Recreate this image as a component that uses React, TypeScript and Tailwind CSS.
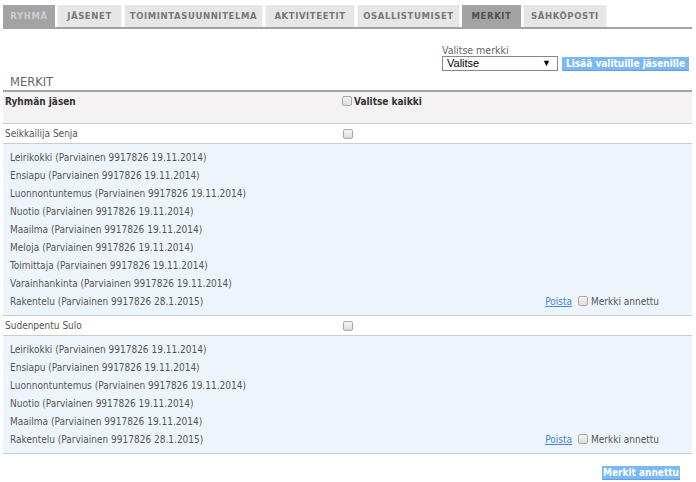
import React from "react";

const tabs = [
  { label: "RYHMÄ", w: "w-[52px]", state: "first" },
  { label: "JÄSENET", w: "w-[65px]", state: "" },
  { label: "TOIMINTASUUNNITELMA", w: "w-[139px]", state: "" },
  { label: "AKTIVITEETIT", w: "w-[90px]", state: "" },
  { label: "OSALLISTUMISET", w: "w-[103px]", state: "" },
  { label: "MERKIT", w: "w-[59px]", state: "active" },
  { label: "SÄHKÖPOSTI", w: "w-[84px]", state: "" },
];

const members = [
  {
    name: "Seikkailija Senja",
    badges: [
      "Leirikokki (Parviainen 9917826 19.11.2014)",
      "Ensiapu (Parviainen 9917826 19.11.2014)",
      "Luonnontuntemus (Parviainen 9917826 19.11.2014)",
      "Nuotio (Parviainen 9917826 19.11.2014)",
      "Maailma (Parviainen 9917826 19.11.2014)",
      "Meloja (Parviainen 9917826 19.11.2014)",
      "Toimittaja (Parviainen 9917826 19.11.2014)",
      "Varainhankinta (Parviainen 9917826 19.11.2014)",
      "Rakentelu (Parviainen 9917826 28.1.2015)",
    ],
  },
  {
    name: "Sudenpentu Sulo",
    badges: [
      "Leirikokki (Parviainen 9917826 19.11.2014)",
      "Ensiapu (Parviainen 9917826 19.11.2014)",
      "Luonnontuntemus (Parviainen 9917826 19.11.2014)",
      "Nuotio (Parviainen 9917826 19.11.2014)",
      "Maailma (Parviainen 9917826 19.11.2014)",
      "Rakentelu (Parviainen 9917826 28.1.2015)",
    ],
  },
];

const Check = () => (
  <span className="inline-block shrink-0 w-[10px] h-[10px] rounded-[2px] border border-[#a9a9a9] bg-gradient-to-b from-[#f4f4f4] to-[#dcdcdc]" />
);

const App: React.FC = () => {
  return (
    <div className="w-[696px] h-[482px] bg-white overflow-hidden font-['DejaVu_Sans_Condensed','DejaVu_Sans',Verdana,sans-serif] text-[10px] text-[#555]">
      {/* Tabs */}
      <div className="pt-[5px] px-[3px]">
        <div className="flex border-b-2 border-[#a3a3a3] w-[689px]">
          {tabs.map((t) => (
            <div
              key={t.label}
              className={`${t.w} h-[22px] mr-[2px] flex items-center justify-center text-[8.5px] font-bold tracking-[0.6px] font-['DejaVu_Sans',Verdana,sans-serif] ${
                t.state === "active"
                  ? "bg-[#a3a3a3] text-[#505050]"
                  : t.state === "first"
                  ? "bg-[#a3a3a3] text-[#c9ced8]"
                  : "bg-[#e6e6e6] text-[#777] border-x border-[#f6f6f6]"
              }`}
            >
              {t.label}
            </div>
          ))}
        </div>
      </div>

      {/* Badge picker */}
      <div className="flex justify-end pr-[7px] mt-[15px]">
        <div className="flex flex-col">
          <span className="text-[10.5px] leading-[12px] text-[#666]">Valitse merkki</span>
          <div className="flex items-end gap-[4px]">
            <div className="w-[116px] h-[15px] border border-[#888] bg-white flex items-center justify-between pl-[4px] pr-[6px] text-[11px] text-black font-['Liberation_Sans',Arial,sans-serif]">
              <span>Valitse</span>
              <span className="text-[9px]">▼</span>
            </div>
            <div className="h-[14px] w-[127px] bg-[#7ab9f3] border-b border-[#5da2e8] text-white font-bold text-[10px] whitespace-nowrap flex items-center justify-center">
              Lisää valituille jäsenille
            </div>
          </div>
        </div>
      </div>

      {/* Title */}
      <div className="px-[10px] pt-[4px] h-[19px] text-[11.5px] text-[#666] leading-[15px] font-['DejaVu_Sans',Verdana,sans-serif]">MERKIT</div>

      {/* Table */}
      <div className="mx-[3px] w-[689px] border-t-2 border-[#a3a3a3]">
        <div className="flex h-[32px] bg-[#f4f2f2] border-b border-[#c8cdd3] pt-[2px] font-bold text-[#333]">
          <div className="w-[339px] pl-[2px]">Ryhmän jäsen</div>
          <div className="flex items-center gap-[2px] h-[14px]">
            <Check />
            <span>Valitse kaikki</span>
          </div>
        </div>

        {members.map((m) => (
          <div key={m.name}>
            <div className="flex items-center h-[20px] border-b border-[#c8cdd3] bg-white text-[#555]">
              <div className="w-[340px] pl-[2px]">{m.name}</div>
              <Check />
            </div>
            <div className="bg-[#eef4fc] border-b border-[#c8cdd3] pt-[4px] pb-[5px]">
              {m.badges.map((b, i) => (
                <div key={b} className="flex items-center h-[18px] pl-[7px]">
                  <span className="flex-1">{b}</span>
                  {i === m.badges.length - 1 && (
                    <div className="flex items-center mr-[33px]">
                      <span className="text-[#3f86dd] underline mr-[6px]">Poista</span>
                      <Check />
                      <span className="ml-[3px]">Merkki annettu</span>
                    </div>
                  )}
                </div>
              ))}
            </div>
          </div>
        ))}
      </div>

      <div className="flex justify-end pr-[16px] pt-[12px]">
        <div className="h-[14px] w-[78px] bg-[#7ab9f3] border-b border-[#5da2e8] text-white font-bold text-[10px] whitespace-nowrap flex items-center justify-center">
          Merkit annettu
        </div>
      </div>
    </div>
  );
};

export default App;
